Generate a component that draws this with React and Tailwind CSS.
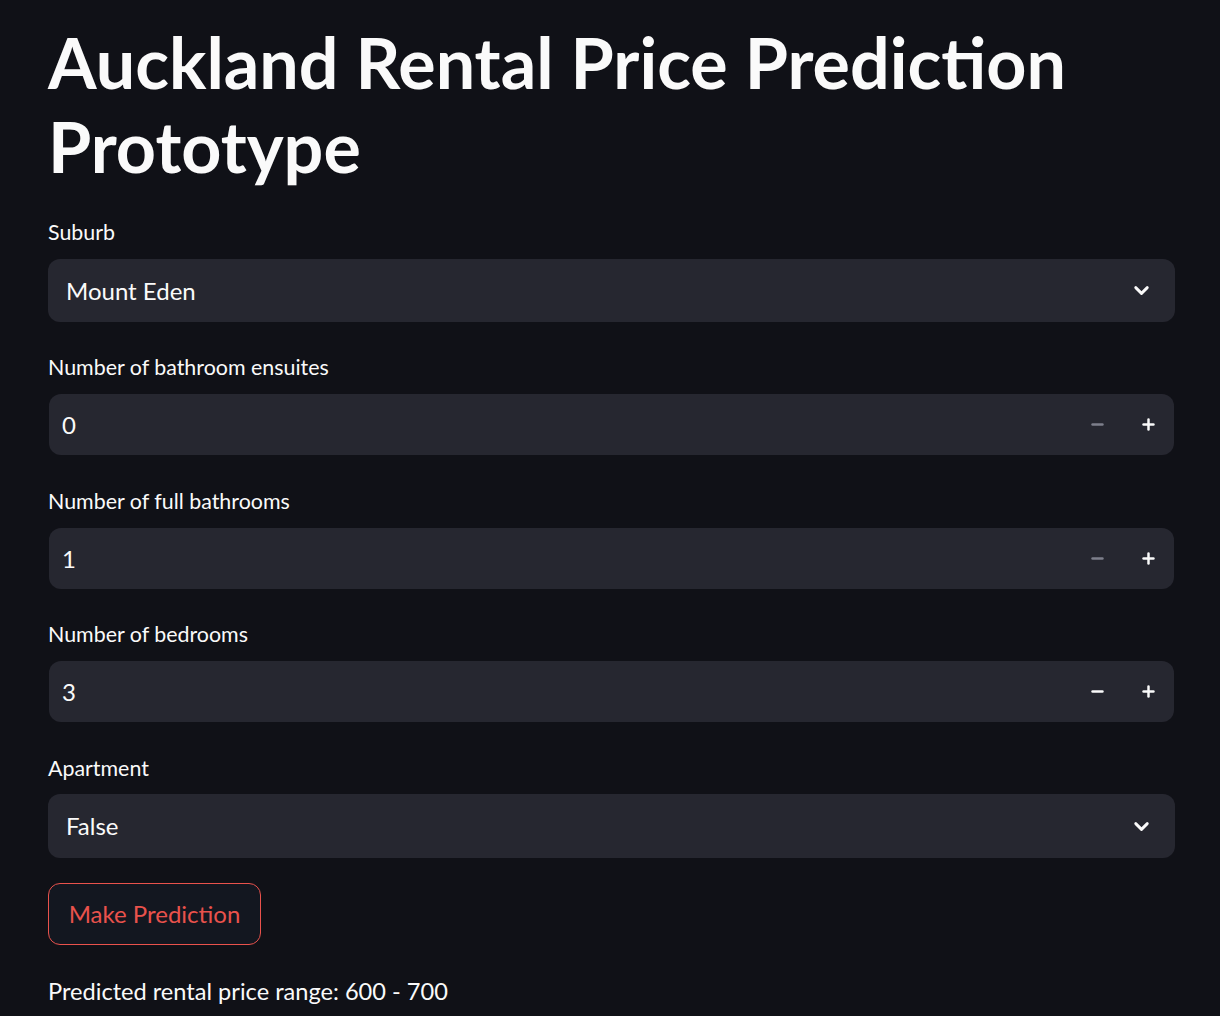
import { ChevronDown, Minus, Plus } from 'lucide-react';

const font = { fontFamily: 'Lato, "Noto Sans", sans-serif' };

const Label = ({ children }) => (
  <div className="h-[28px] leading-[28px] text-[21.4px] text-[#fafafa]">{children}</div>
);

const SelectBox = ({ value, className }) => (
  <div className={`w-full rounded-[12px] bg-[#262730] flex items-center justify-between pl-[18px] pr-[22px] ${className}`}>
    <span className="text-[24px] text-[#fafafa]">{value}</span>
    <ChevronDown size={23} strokeWidth={3} className="text-[#fafafa]" />
  </div>
);

const NumberBox = ({ value, canDecrement }) => (
  <div className="mt-[13px] ml-px h-[61px] w-[1125px] rounded-[12px] bg-[#262730] flex items-center justify-between pl-[13px] pr-[17px]">
    <span className="text-[24px] text-[#fafafa]">{value}</span>
    <div className="flex items-center gap-[34px]">
      <Minus size={17} strokeWidth={3.5} className={canDecrement ? 'text-[#fafafa]' : 'text-[#7d7f8b]'} />
      <Plus size={17} strokeWidth={3.5} className="text-[#fafafa]" />
    </div>
  </div>
);

export default function App() {
  return (
    <div className="min-h-screen bg-[#101117] text-[#fafafa]" style={font}>
      <div className="w-[1127px] ml-[48px] pt-[20px] flex flex-col">
        <h1 className="text-[70px] leading-[84px] font-bold">
          Auckland Rental Price Prediction Prototype
        </h1>

        <div className="mt-[30px]">
          <Label>Suburb</Label>
          <SelectBox value="Mount Eden" className="mt-[13px] h-[63px]" />
        </div>

        <div className="mt-[31px]">
          <Label>Number of bathroom ensuites</Label>
          <NumberBox value="0" />
        </div>

        <div className="mt-[32px]">
          <Label>Number of full bathrooms</Label>
          <NumberBox value="1" />
        </div>

        <div className="mt-[31px]">
          <Label>Number of bedrooms</Label>
          <NumberBox value="3" canDecrement />
        </div>

        <div className="mt-[32px]">
          <Label>Apartment</Label>
          <SelectBox value="False" className="mt-[12px] h-[64px]" />
        </div>

        <button className="mt-[25px] self-start h-[62px] w-[213px] rounded-[12px] border border-[#e9524c] bg-[#131720] text-[#e9524c] text-[24px]">
          Make Prediction
        </button>

        <p className="mt-[32px] text-[23.6px] leading-[28px]">Predicted rental price range: 600 - 700</p>
      </div>
    </div>
  );
}
